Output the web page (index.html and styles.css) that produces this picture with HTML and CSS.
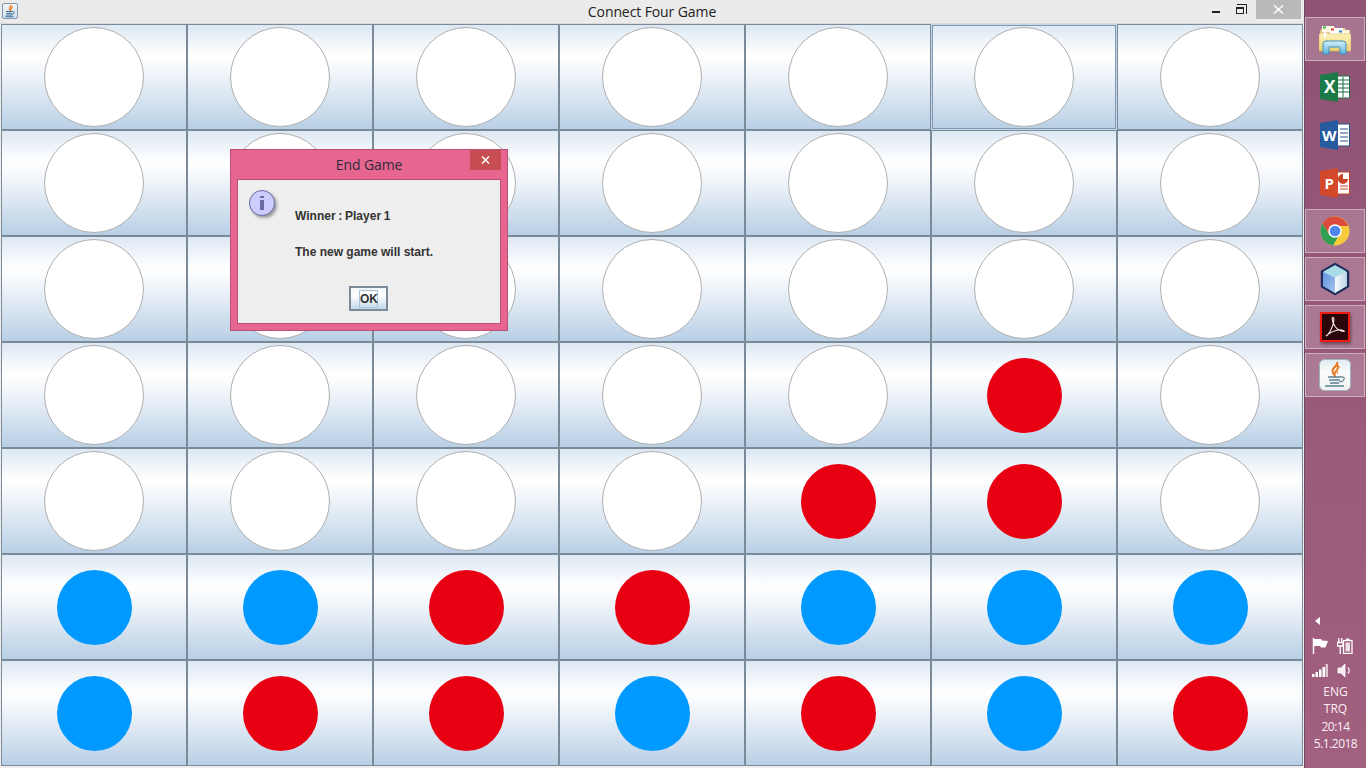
FILE: index.html
```html
<!DOCTYPE html>
<html lang="en">
<head>
    <meta charset="UTF-8">
    <title>Connect Four Game</title>
    <link rel="stylesheet" href="styles.css">
</head>
<body>
    <main class="window">
        <header class="titlebar">
            <span class="app-icon">
                <svg width="14" height="14" viewBox="0 0 14 14"><path d="M7.500 1c1 1.500-1.500 2.500-1 4 .2.600.6 1 1 1.400-.2-1.300 2.600-2.200 1.600-4.400" fill="none" stroke="#e8761a" stroke-width="1.300"/><path d="M3 7.500h6.500M3.500 9.300h5.500M3 11h6.500M2.500 12.700h8" stroke="#3f6f96" stroke-width="1"/><path d="M9.500 7.500c2.500-.5 2.500 2-.5 2.800" fill="none" stroke="#3f6f96"/></svg>
            </span>
            <h1>Connect Four Game</h1>
            <div class="controls">
                <span class="ctl-min"></span>
                <span class="ctl-restore"><i></i></span>
                <span class="ctl-close">
                    <svg width="11" height="9" viewBox="0 0 11 9"><path d="M1 .5l9 8M10 .5l-9 8" stroke="#fff" stroke-width="1.500"/></svg>
                </span>
            </div>
        </header>

        <section class="board">
            <div class="cell"><b class="disc"></b></div>
            <div class="cell"><b class="disc"></b></div>
            <div class="cell"><b class="disc"></b></div>
            <div class="cell"><b class="disc"></b></div>
            <div class="cell"><b class="disc"></b></div>
            <div class="cell focused"><b class="disc"></b></div>
            <div class="cell"><b class="disc"></b></div>

            <div class="cell"><b class="disc"></b></div>
            <div class="cell"><b class="disc"></b></div>
            <div class="cell"><b class="disc"></b></div>
            <div class="cell"><b class="disc"></b></div>
            <div class="cell"><b class="disc"></b></div>
            <div class="cell"><b class="disc"></b></div>
            <div class="cell"><b class="disc"></b></div>

            <div class="cell"><b class="disc"></b></div>
            <div class="cell"><b class="disc"></b></div>
            <div class="cell"><b class="disc"></b></div>
            <div class="cell"><b class="disc"></b></div>
            <div class="cell"><b class="disc"></b></div>
            <div class="cell"><b class="disc"></b></div>
            <div class="cell"><b class="disc"></b></div>

            <div class="cell"><b class="disc"></b></div>
            <div class="cell"><b class="disc"></b></div>
            <div class="cell"><b class="disc"></b></div>
            <div class="cell"><b class="disc"></b></div>
            <div class="cell"><b class="disc"></b></div>
            <div class="cell"><b class="disc red"></b></div>
            <div class="cell"><b class="disc"></b></div>

            <div class="cell"><b class="disc"></b></div>
            <div class="cell"><b class="disc"></b></div>
            <div class="cell"><b class="disc"></b></div>
            <div class="cell"><b class="disc"></b></div>
            <div class="cell"><b class="disc red"></b></div>
            <div class="cell"><b class="disc red"></b></div>
            <div class="cell"><b class="disc"></b></div>

            <div class="cell"><b class="disc blue"></b></div>
            <div class="cell"><b class="disc blue"></b></div>
            <div class="cell"><b class="disc red"></b></div>
            <div class="cell"><b class="disc red"></b></div>
            <div class="cell"><b class="disc blue"></b></div>
            <div class="cell"><b class="disc blue"></b></div>
            <div class="cell"><b class="disc blue"></b></div>

            <div class="cell"><b class="disc blue"></b></div>
            <div class="cell"><b class="disc red"></b></div>
            <div class="cell"><b class="disc red"></b></div>
            <div class="cell"><b class="disc blue"></b></div>
            <div class="cell"><b class="disc red"></b></div>
            <div class="cell"><b class="disc blue"></b></div>
            <div class="cell"><b class="disc red"></b></div>
        </section>

        <div class="dialog">
            <div class="dialog-title">
                <h2>End Game</h2>
                <span class="dialog-close">
                    <svg width="9" height="8" viewBox="0 0 9 8"><path d="M1 .5l7 7M8 .5l-7 7" stroke="#fff" stroke-width="1.500"/></svg>
                </span>
            </div>
            <div class="dialog-body">
                <div class="info-icon"><span></span></div>
                <div class="message">
                    <p class="winner">Winner : Player 1</p>
                    <p>The new game will start.</p>
                </div>
                <button class="ok"><span>OK</span></button>
            </div>
        </div>
    </main>

    <aside class="taskbar">
        <div class="pins">
            <div class="pin active">
                <svg width="32" height="32" viewBox="0 0 32 32">
                    <defs>
                        <linearGradient id="folder" x1="0" y1="0" x2="0" y2="1"><stop offset="0" stop-color="#fdf3b8"/><stop offset="1" stop-color="#eccf6c"/></linearGradient>
                        <linearGradient id="handle" x1="0" y1="0" x2="0" y2="1"><stop offset="0" stop-color="#d4f0fa"/><stop offset="1" stop-color="#5fb4de"/></linearGradient>
                    </defs>
                    <path d="M1 8l3-5h11l1 2h10l1 2h4v4H1z" fill="#e2c888"/>
                    <path d="M3 3h12v6H3z" fill="#fff8e0"/><path d="M4 3.500h3v2H4z" fill="#2fb24a"/>
                    <path d="M11 5h13v6H11z" fill="#fff"/><path d="M12 5.500h3v2h-3z" fill="#d8402c"/>
                    <path d="M19 7h11v6H19z" fill="#fff8e0"/><path d="M20 7.500h3v2h-3z" fill="#2a86d8"/>
                    <path d="M0 11h32v17H0z" fill="url(#folder)" stroke="#d8bc6e" stroke-width=".6"/>
                    <path d="M4 31V22c0-3 1-4 4-4h15c3 0 4 1 4 4v9h-6v-6c0-1-.5-1-1-1h-9c-1 0-1 0-1 1v6z" fill="url(#handle)" stroke="#3f90bc"/>
                    <path d="M5 12l1 5 1-5 4-1-4-.5-1-4-1 4-4 .5z" fill="#fff"/>
                </svg>
            </div>
            <div class="pin">
                <svg width="30" height="30" viewBox="0 0 30 30">
                    <path d="M17 4h12.500v22H17z" fill="#fff" stroke="#1c7044"/>
                    <path d="M18 8h11M18 12h11M18 16h11M18 20h11M23 5v20" stroke="#1c7044" fill="none"/>
                    <path d="M0 3l18-3v30L0 27z" fill="#1c7a48"/>
                    <text x="4" y="21" class="glyph glyph-x">X</text>
                </svg>
            </div>
            <div class="pin">
                <svg width="30" height="30" viewBox="0 0 30 30">
                    <path d="M17 4h12.500v22H17z" fill="#fff" stroke="#23508f"/>
                    <path d="M20 9h8M20 13h8M20 17h8M20 21h8" stroke="#23508f" fill="none"/>
                    <path d="M0 3l18-3v30L0 27z" fill="#275ba0"/>
                    <text x="2" y="21" class="glyph">W</text>
                </svg>
            </div>
            <div class="pin">
                <svg width="30" height="30" viewBox="0 0 30 30">
                    <path d="M17 4h12.500v22H17z" fill="#fff" stroke="#c9452a"/>
                    <path d="M20 18h8M20 21h8" stroke="#c9452a" fill="none"/>
                    <path d="M23 6a5 5 0 1 0 5 5h-5z" fill="#c9452a"/>
                    <path d="M0 3l18-3v30L0 27z" fill="#d2492b"/>
                    <text x="4.500" y="21" class="glyph">P</text>
                </svg>
            </div>
            <div class="pin active">
                <svg width="30" height="30" viewBox="0 0 30 30">
                    <circle cx="15" cy="15" r="14.500" fill="#f7cc3c"/>
                    <path d="M15 .5A14.500 14.500 0 0 0 2.400 7.800L9 18l6-8h13.300A14.500 14.500 0 0 0 15 .5z" fill="#db4a3c"/>
                    <path d="M2.400 7.800A14.500 14.500 0 0 0 13 29.400L19 19l-10-1z" fill="#2f9f53"/>
                    <circle cx="15" cy="15" r="6.800" fill="#fff"/>
                    <circle cx="15" cy="15" r="5.300" fill="#4f86ec"/>
                </svg>
            </div>
            <div class="pin active">
                <svg width="32" height="34" viewBox="0 0 32 34">
                    <defs>
                        <linearGradient id="cubeleft" x1="0" y1="0" x2="1" y2="1"><stop offset="0" stop-color="#5f8fe0"/><stop offset="1" stop-color="#a9c6ee"/></linearGradient>
                        <linearGradient id="cuberight" x1="0" y1="0" x2="1" y2="0"><stop offset="0" stop-color="#fbfdfe"/><stop offset="1" stop-color="#b9d5e6"/></linearGradient>
                    </defs>
                    <path d="M16 2l13 7.500v15L16 32 3 24.500v-15z" fill="#d5e6f4" stroke="#1d2c5c" stroke-width="2.400" stroke-linejoin="round"/>
                    <path d="M16 15.500L4.500 9.500 16 3.300l11.500 6.200z" fill="#a8dce6"/>
                    <path d="M16 15.500V31L4.200 24V10z" fill="url(#cubeleft)"/>
                    <path d="M16 15.500V31l11.800-7V10z" fill="url(#cuberight)"/>
                </svg>
            </div>
            <div class="pin active">
                <svg class="pdf" width="30" height="30" viewBox="0 0 30 30">
                    <rect x="1" y="1" width="28" height="28" fill="#2b0609" stroke="#ee1c10" stroke-width="2"/>
                    <path d="M6 24c3-1.500 6-8 7.500-13 .7-3 .4-6-.8-5.500-1.300.8 .3 6 2.800 9.500 2 3 4.500 4 8.500 4.500 1.200 0-1.500-2.500-6-1.500-4.500 1-9 3-12 6z" fill="none" stroke="#f4e6e6" stroke-width="1.100"/>
                </svg>
            </div>
            <div class="pin active">
                <svg width="32" height="32" viewBox="0 0 32 32">
                    <defs>
                        <linearGradient id="tile" x1="0" y1="0" x2="0" y2="1"><stop offset="0" stop-color="#dfeaf0"/><stop offset=".4" stop-color="#fbfcfb"/><stop offset="1" stop-color="#eef3f2"/></linearGradient>
                    </defs>
                    <rect x=".5" y=".5" width="31" height="31" rx="5" fill="url(#tile)" stroke="#9fb2bc"/>
                    <path d="M18 3c1.500 3.500-5 5.500-4.500 9.500.2 1.500 1 2.500 2 3.500-1-3.500 5.500-5 3-10" fill="none" stroke="#e8761a" stroke-width="2"/>
                    <path d="M21 8c-3 1.500-3.500 3.500-2.500 7" fill="none" stroke="#f09a4a" stroke-width="1.200"/>
                    <path d="M9 18h13M10 21h11M11 24h9M6 27h19" stroke="#5f7f92" stroke-width="1.600"/>
                    <path d="M22 18c4.500-1 4.500 4-1.500 5" fill="none" stroke="#5f7f92" stroke-width="1.300"/>
                </svg>
            </div>
        </div>

        <div class="tray">
            <div class="tray-arrow"></div>
            <div class="tray-icons">
                <svg width="16" height="16" viewBox="0 0 16 16"><path d="M1.500 0v16" stroke="#fff" stroke-width="1.500"/><path d="M2 1h7l1 1.500 6 .5-2.500 6.500H9L8 8H2z" fill="#fff"/></svg>
                <svg width="16" height="16" viewBox="0 0 16 16"><path d="M.5 4.500h5.500v3.500H.5zM1.800 0v4M4.700 0v4M3.200 8v8" stroke="#fff" fill="none" stroke-width="1.300"/><rect x="6.500" y="2.500" width="8.500" height="13" fill="none" stroke="#fff" stroke-width="1.300"/><path d="M9 .5h3.500v2H9z" fill="#fff"/><path d="M8.500 4.500h4.500v9H8.500z" fill="#f0dfe8"/></svg>
                <svg width="16" height="13" viewBox="0 0 16 13"><path d="M0 10h2.500v3H0zM3.500 8H6v5H3.500zM7 5.500h2.500V13H7zM10.500 3H13v10h-2.500z" fill="#fff"/><path d="M13.500 0H16v13h-2.500z" fill="#f4e8ee" opacity=".75"/></svg>
                <svg width="16" height="15" viewBox="0 0 16 15"><path d="M1 5h3l4-4v13l-4-4H1z" fill="#f4e9ef" stroke="#fff" stroke-width=".8"/><path d="M11 4.500c1.500 1.500 1.500 4.500 0 6" fill="none" stroke="#fff" stroke-width="1.200"/></svg>
            </div>
            <div class="tray-text">
                <span>ENG</span>
                <span>TRQ</span>
                <span class="num">20:14</span>
                <span class="num">5.1.2018</span>
            </div>
        </div>
    </aside>
</body>
</html>
```

FILE: styles.css
```css
* { margin: 0; padding: 0; box-sizing: border-box }
html, body { height: 100%; overflow: hidden }
body { display: flex; width: 1366px; height: 768px; background: #ededed; font-family: "Open Sans", "Liberation Sans", sans-serif }

/* window */
.window { position: relative; width: 1304px; height: 768px; background: #eeeeee }
.titlebar { position: relative; display: flex; justify-content: center; align-items: center; height: 24px; padding-bottom: 1px; background: #ebebeb; border-bottom: 1px solid #dadada }
.titlebar h1 { font-size: 14px; font-weight: 400; color: #222; letter-spacing: -.1px }
.app-icon { position: absolute; left: 2px; top: 3px; display: flex; align-items: center; justify-content: center; width: 16px; height: 16px; border: 1px solid #7f97ad; border-radius: 2px; background: linear-gradient(#f4f7fa, #cfdeec) }

.controls { position: absolute; left: 1212px; top: 0; display: flex; height: 19px }
.ctl-min { width: 8px; height: 2px; margin-top: 11px; background: #222 }
.ctl-restore { position: relative; width: 10px; height: 10px; margin: 4px 0 0 17px; border: 1px solid #222; border-width: 1px 1px 0 0 }
.ctl-restore i { position: absolute; left: -1px; top: 2px; width: 8px; height: 7px; border: 2px solid #222; border-width: 2px 1px 1px 1px; background: #ebebeb }
.ctl-close { display: flex; align-items: center; justify-content: center; width: 45px; height: 19px; margin-left: 9px; background: #b9b9b9 }

/* board */
.board { display: grid; grid-template-columns: repeat(7, 186px); grid-auto-rows: 106px; padding-left: 1px }
.cell { display: flex; align-items: center; justify-content: center; border: 1px solid #7a8a99;
    background: linear-gradient(#dde8f3 0, #ffffff 30%, #eef3f9 50%, #b8cfe5 100%) }
.cell.focused { border-color: #c6d6e6; outline: 1px solid #7f9ab5; outline-offset: -2px }
.disc { display: block; width: 75px; height: 75px; border-radius: 50% }
.disc:not(.red):not(.blue) { width: 100px; height: 100px; background: #fff; border: 1px solid #aeaeae }
.red { background: #e80012 }
.blue { background: #0099ff }

/* message dialog */
.dialog { position: absolute; left: 230px; top: 149px; width: 278px; height: 182px; padding: 0 6px 6px; background: #e6668f; border: 1px solid #bb4f78 }
.dialog-title { position: relative; display: flex; align-items: center; justify-content: center; height: 29px }
.dialog-title h2 { font-size: 14px; font-weight: 400; color: #2f2a3c; letter-spacing: -.1px }
.dialog-close { position: absolute; right: 0; top: 0; display: flex; align-items: center; justify-content: center; width: 31px; height: 20px; background: #c64e52 }
.dialog-body { position: relative; height: 145px; background: #eeeeee; border: 1px solid #bb4f78 }
.info-icon { position: absolute; left: 11px; top: 10px; width: 26px; height: 26px; border-radius: 50%; background: #ccccff; border: 1px solid #6a6aa0; box-shadow: 2px 2px 3px rgba(0, 0, 0, .35) }
.info-icon span { position: absolute; left: 10px; top: 5px; width: 4px; height: 14px; background: #6a6aa0; border-top: 2px solid #6a6aa0; box-shadow: inset 0 2px 0 #ccccff }
.message { position: absolute; left: 57px; top: 29px; font: bold 12px "Liberation Sans", sans-serif; color: #333 }
.message p { height: 36px; line-height: 14px }
.message .winner { word-spacing: -.6px }
.ok { position: absolute; left: 111px; top: 106px; display: flex; align-items: center; justify-content: center; width: 39px; height: 25px; border: 2px solid #7a8a99; background: linear-gradient(#f2f6fa, #fff 35%, #c4d6e8); font: bold 12px "Liberation Sans", sans-serif; color: #333 }
.ok span { display: block; padding: 1px 0; border: 1px solid #a9c3dc; line-height: 14px; width: 19px; text-align: center }

/* taskbar */
.taskbar { display: flex; flex-direction: column; justify-content: space-between; width: 62px; height: 768px; padding-top: 17px; background: linear-gradient(#8f5273, #a2607f); border-left: 1px solid #6f4a62 }
.pins { display: flex; flex-direction: column; gap: 4px }
.pin { display: flex; align-items: center; justify-content: center; width: 60px; height: 44px; border: 1px solid transparent }
.pin.active { background: rgba(255, 255, 255, .2); border-color: rgba(255, 255, 255, .4) }
.glyph { font: bold 15px "Open Sans", sans-serif; fill: #fff }
.glyph-x { font-size: 17px }
.pdf { box-shadow: 1px 2px 3px rgba(0, 0, 0, .4) }

.tray { display: flex; flex-direction: column; align-items: center; padding-bottom: 15px; color: #fff }
.tray-arrow { align-self: flex-start; width: 0; height: 0; margin: 0 0 13px 10px; border: 4px solid transparent; border-right: 5px solid #fff; border-left: 0 }
.tray-icons { align-self: flex-start; display: grid; grid-template-columns: 16px 16px; align-items: center; gap: 9px; margin-left: 7px }
.tray-text { display: flex; flex-direction: column; align-items: center; margin-top: 5px; font-size: 12px; line-height: 17.600px; color: #fbeef4 }
.tray-text .num { letter-spacing: -.5px }
```
